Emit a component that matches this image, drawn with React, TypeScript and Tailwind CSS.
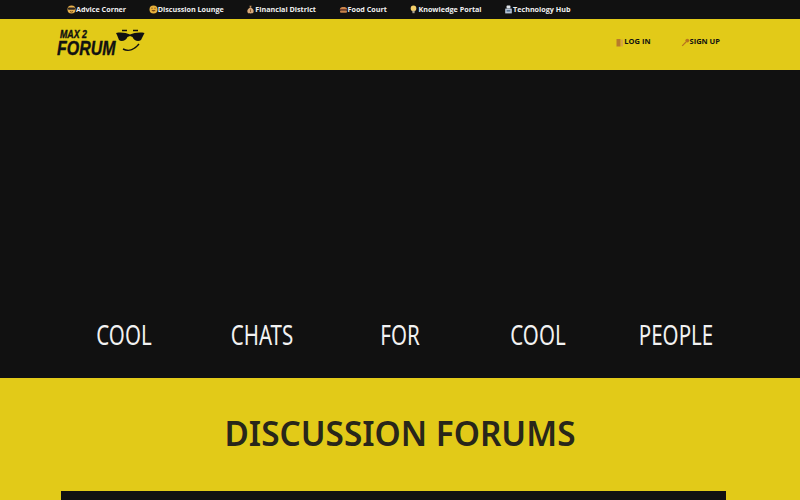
const navLinks = [
  { label: "Advice Corner", icon: "cool" },
  { label: "Discussion Lounge", icon: "smile" },
  { label: "Financial District", icon: "money" },
  { label: "Food Court", icon: "burger" },
  { label: "Knowledge Portal", icon: "bulb" },
  { label: "Technology Hub", icon: "tech" },
];

const heroWords = ["COOL", "CHATS", "FOR", "COOL", "PEOPLE"];

function NavIcon({ name }: { name: string }) {
  return (
    <svg width="9" height="9" viewBox="0 0 9 9" className="shrink-0">
      {name === "cool" && (
        <>
          <circle cx="4.5" cy="4.5" r="4" fill="#e9b04a" />
          <rect x="1" y="2.6" width="7" height="2.2" rx="0.8" fill="#2b2420" />
          <path d="M3 6.5 Q4.5 7.6 6 6.5" stroke="#5a3a10" strokeWidth="0.8" fill="none" />
        </>
      )}
      {name === "smile" && (
        <>
          <circle cx="4.5" cy="4.5" r="4" fill="#e8b13c" />
          <path d="M2.4 5 Q4.5 8 6.6 5 Z" fill="#7a4a12" />
          <circle cx="3" cy="3.2" r="0.6" fill="#7a4a12" />
          <circle cx="6" cy="3.2" r="0.6" fill="#7a4a12" />
        </>
      )}
      {name === "money" && (
        <>
          <path d="M3.4 0.8 H5.6 L5 2.6 H4 Z" fill="#c9935a" />
          <path d="M4 2.6 H5 C7 3.6 8 5.6 7.6 7 C7.3 8.2 6 8.4 4.5 8.4 C3 8.4 1.7 8.2 1.4 7 C1 5.6 2 3.6 4 2.6 Z" fill="#d8a878" />
          <rect x="4" y="4.4" width="1" height="2.6" fill="#8a5a30" />
        </>
      )}
      {name === "burger" && (
        <>
          <path d="M1 4 C1 1.4 8 1.4 8 4 Z" fill="#c8834a" />
          <rect x="0.8" y="4" width="7.4" height="1.4" fill="#7a3f2a" />
          <rect x="1" y="5.4" width="7" height="2.4" rx="1" fill="#c8834a" />
        </>
      )}
      {name === "bulb" && (
        <>
          <circle cx="4.5" cy="3.4" r="2.8" fill="#f3cf6a" />
          <rect x="3.4" y="5.6" width="2.2" height="2.6" fill="#a9a194" />
        </>
      )}
      {name === "tech" && (
        <>
          <rect x="2.6" y="0.6" width="3.8" height="3" rx="0.6" fill="#dfe4ea" />
          <rect x="1.2" y="3.6" width="6.6" height="4.8" fill="#b6c4d6" />
          <rect x="2.6" y="5" width="3.8" height="1.6" fill="#54708f" />
        </>
      )}
    </svg>
  );
}

function Logo() {
  return (
    <div className="flex items-start">
      <div className="w-[58px] flex flex-col font-['Liberation_Sans',sans-serif] font-bold italic text-[#111] [-webkit-text-stroke:0.4px_#111]">
        <span className="text-[11px] leading-[12px] ml-[3px] whitespace-nowrap origin-left scale-x-[0.8]">MAX 2</span>
        <span className="text-[21px] leading-[16px] whitespace-nowrap origin-left scale-x-[0.76]">FORUM</span>
      </div>
      <svg width="30" height="26" viewBox="0 0 30 26" className="mt-[1px]">
        <path d="M7 1.5 H12 M18 1.5 H23" stroke="#111" strokeWidth="1.6" />
        <path d="M1 4 C7 3 11 4 15 5.5 C19 4 24 3 29.5 4 L28.5 6 L26 11 C23.5 13 19 12 17.5 8 L15 7 L12.5 8 C11 12 6 13 4 11 L2 6 Z" fill="#111" />
        <path d="M8 20 C14 23 20 20 24 15" stroke="#111" strokeWidth="1.4" fill="none" />
      </svg>
    </div>
  );
}

export default function App() {
  return (
    <div className="h-[500px] overflow-hidden bg-[#e2ca18] font-['Open_Sans',sans-serif]">
      <div className="h-[19px] bg-[#111111] flex items-center gap-[22.5px] pl-[67px]">
        {navLinks.map((link) => (
          <a key={link.label} className="flex items-center text-[7.2px] font-bold text-[#f0f0f0] whitespace-nowrap">
            <NavIcon name={link.icon} />
            {link.label}
          </a>
        ))}
      </div>

      <header className="h-[51px] pb-[5px] flex items-center justify-between pl-[57px] pr-[80px]">
        <Logo />
        <div className="flex items-center gap-[30px] text-[7.5px] font-bold text-[#111]">
          <a className="flex items-center">
            <svg width="9" height="9" viewBox="0 0 9 9">
              <rect x="1.5" y="1" width="4" height="7.5" fill="#b87a2a" />
              <path d="M6 1.5 H8 V8.5 H6 Z" fill="#d9a640" />
            </svg>
            LOG IN
          </a>
          <a className="flex items-center">
            <svg width="9" height="9" viewBox="0 0 9 9">
              <circle cx="6.3" cy="2.6" r="1.9" fill="#b8741e" />
              <path d="M5 4 L1.2 7.8" stroke="#b8741e" strokeWidth="1.2" />
            </svg>
            SIGN UP
          </a>
        </div>
      </header>

      <section className="h-[308px] bg-[#111111] flex items-end pb-[27px] px-[55px]">
        <div className="grid grid-cols-5 w-full">
          {heroWords.map((word, i) => (
            <span key={i} className="text-center text-[27px] leading-[32px] text-[#f2f2f2] font-['Noto_Sans',sans-serif] scale-x-[0.76]">
              {word}
            </span>
          ))}
        </div>
      </section>

      <section className="flex flex-col">
        <h1 className="pt-[31px] h-[113px] text-center text-[33.3px] leading-[48px] font-semibold text-[#28261a] font-['Noto_Sans',sans-serif]">
          DISCUSSION FORUMS
        </h1>
        <div className="ml-[61px] w-[665px] h-[40px] bg-[#111111]" />
      </section>
    </div>
  );
}
